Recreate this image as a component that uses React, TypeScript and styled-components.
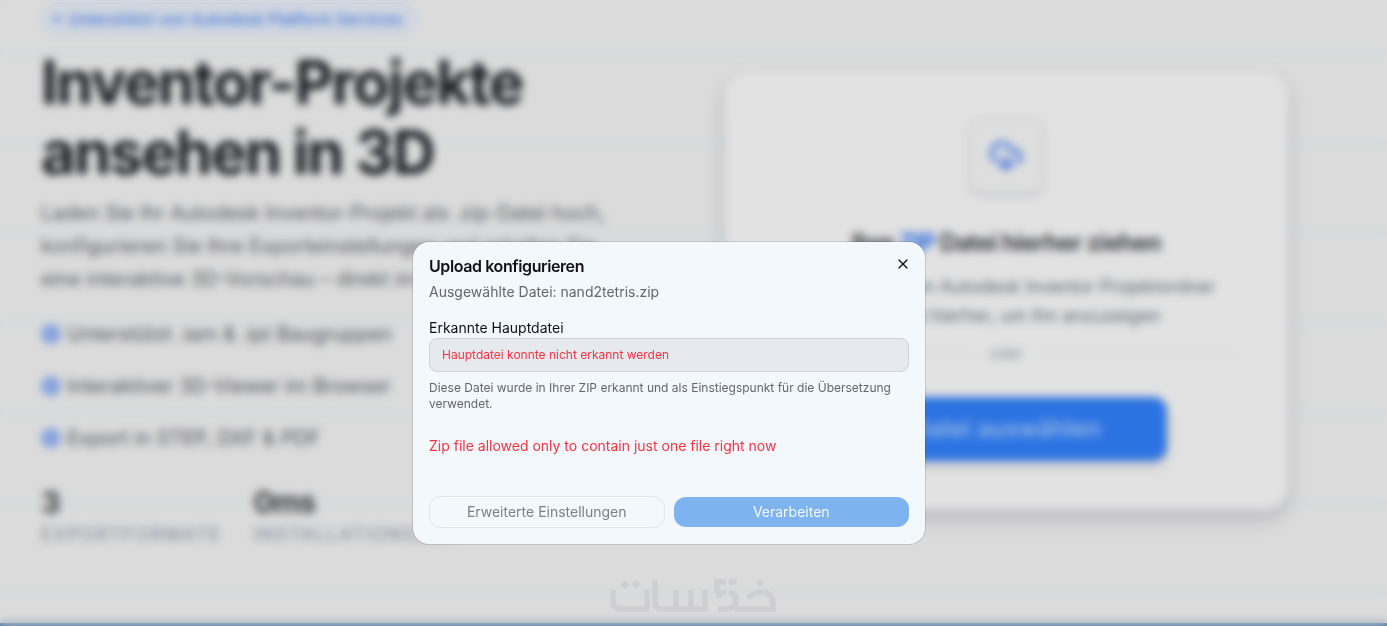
import React from "react";
import styled, { createGlobalStyle } from "styled-components";
import { CloudDownload, CircleCheck, X } from "lucide-react";

const GlobalStyle = createGlobalStyle`
  *, *::before, *::after { box-sizing: border-box; }
  body {
    margin: 0;
    overflow: hidden;
    background: #f4f4f4;
    color: #0f1115;
    font-family: Inter, "Liberation Sans", sans-serif;
    font-size: 14px;
    line-height: 20px;
  }
  h1, h2, p, ul, dl, dd { margin: 0; padding: 0; }
  button, input { font: inherit; }
`;

const Page = styled.div`
  display: flex;
  flex-direction: column;
  height: 100vh;
  overflow: hidden;
`;

const Hero = styled.main`
  flex: 1;
  min-height: 0;
  overflow: hidden;
  display: grid;
  grid-template-columns: minmax(0, 1fr) minmax(0, 1fr);
  gap: 120px;
  align-items: start;
  padding: 3px 99px 0 41px;
  background: repeating-linear-gradient(
    to bottom,
    transparent 0 52px,
    #e2f2f4 52px 54px,
    transparent 54px 90px
  );
`;

const NextSection = styled.footer`
  flex: none;
  height: 3px;
  background: #5f88b4;
`;

const Intro = styled.section`
  display: flex;
  flex-direction: column;
  align-items: flex-start;
`;

const Badge = styled.span`
  display: flex;
  align-items: center;
  gap: 8px;
  height: 32px;
  padding: 0 12px;
  border: 1px solid #c6d8fa;
  border-radius: 16px;
  background: #eaf0fb;
  color: #4a84f4;
  font-size: 16px;
  font-weight: 500;
  white-space: nowrap;
`;

const Dot = styled.i`
  width: 6px;
  height: 6px;
  border-radius: 50%;
  background: currentColor;
`;

const Headline = styled.h1`
  margin-top: 12px;
  font-size: 60px;
  font-weight: 700;
  line-height: 70px;
  letter-spacing: -0.03em;
  color: #1c1e24;
`;

const Lead = styled.p`
  margin-top: 10px;
  font-size: 20px;
  line-height: 33px;
  white-space: nowrap;
  color: #60646e;
`;

const Features = styled.ul`
  display: grid;
  gap: 24px;
  margin-top: 24px;
  list-style: none;
`;

const Feature = styled.li`
  display: flex;
  align-items: center;
  gap: 6px;
  font-size: 20px;
  line-height: 28px;
  color: #5a5e68;
  svg { color: #6f9df8; fill: #a9c5fa; }
`;

const Stats = styled.dl`
  display: flex;
  gap: 32px;
  margin-top: 32px;
`;

const Stat = styled.div`
  display: flex;
  flex-direction: column-reverse;
`;

const StatLabel = styled.dt`
  font-size: 18px;
  line-height: 30px;
  letter-spacing: 0.1em;
  text-transform: uppercase;
  color: #8c99ae;
`;

const StatValue = styled.dd`
  font-size: 30px;
  font-weight: 700;
  line-height: 36px;
  letter-spacing: -0.03em;
  color: #44464e;
`;

const DropCard = styled.section`
  display: flex;
  flex-direction: column;
  align-items: center;
  margin-top: 69px;
  padding: 46px 48px 49px;
  border-radius: 24px;
  background: #fcfcfc;
  box-shadow: 0 8px 18px rgba(40, 40, 70, 0.2);
  text-align: center;
`;

const IconTile = styled.div`
  display: grid;
  place-items: center;
  width: 76px;
  height: 76px;
  border: 1px solid #cfd3d8;
  border-radius: 14px;
  background: #f8f8f8;
  box-shadow: 0 2px 4px rgba(40, 40, 70, 0.16);
  color: #5a8ff7;
`;

const CardTitle = styled.h2`
  margin-top: 33px;
  font-size: 24px;
  font-weight: 700;
  line-height: 32px;
  letter-spacing: -0.03em;
  color: #4a4c54;
  span { color: #2f74f5; }
`;

const CardText = styled.p`
  margin-top: 13px;
  font-size: 18px;
  line-height: 29px;
  color: #6a7282;
`;

const Divider = styled.div`
  align-self: stretch;
  display: flex;
  align-items: center;
  gap: 12px;
  margin-top: 13px;
  font-size: 16px;
  line-height: 20px;
  color: #9aa2b0;
  &::before, &::after {
    content: "";
    flex: 1;
    height: 1px;
    background: #e3e6ec;
  }
`;

const PickButton = styled.button`
  width: 322px;
  height: 64px;
  margin-top: 34px;
  border: 0;
  border-radius: 14px;
  background: #3281fc;
  color: #b4d2ff;
  font-size: 24px;
  font-weight: 500;
  box-shadow: 0 6px 12px rgba(60, 60, 90, 0.16);
`;

const Overlay = styled.div`
  position: fixed;
  inset: 0;
  display: flex;
  justify-content: center;
  align-items: flex-start;
  padding: 242px 49px 0 0;
  background: rgba(0, 0, 0, 0.1);
  backdrop-filter: blur(4px);
`;

const Dialog = styled.div`
  position: relative;
  width: 100%;
  max-width: 512px;
  padding: 16px;
  border-radius: 16px;
  background: #f3f8fc;
  box-shadow: 0 0 0 1px rgba(0, 0, 0, 0.12);
`;

const DialogTitle = styled.h2`
  font-size: 16px;
  font-weight: 600;
  line-height: 16px;
  letter-spacing: -0.025em;
`;

const DialogText = styled.p`
  margin-top: 8px;
  color: #63676b;
`;

const CloseButton = styled.button`
  position: absolute;
  top: 8px;
  right: 8px;
  display: grid;
  place-items: center;
  width: 28px;
  height: 28px;
  padding: 0;
  border: 0;
  background: transparent;
  color: #0f1115;
`;

const Field = styled.div`
  display: flex;
  flex-direction: column;
  margin-top: 16px;
`;

const FileInput = styled.input`
  width: 100%;
  height: 34px;
  padding: 0 12px 2px;
  border: 1px solid #d0d3d7;
  border-radius: 8px;
  outline: 0;
  background: #e6e9ed;
  color: #fc333e;
  font-size: 12px;
`;

const Hint = styled.p`
  margin-top: 8px;
  font-size: 12px;
  line-height: 16px;
  color: #63676b;
`;

const ErrorText = styled.p`
  margin-top: 24px;
  color: #fc333e;
`;

const Actions = styled.div`
  display: grid;
  grid-template-columns: 1fr 1fr;
  align-items: center;
  gap: 9px;
  margin-top: 40px;
`;

const ActionButton = styled.button<{ $primary?: boolean }>`
  height: ${(p) => (p.$primary ? 30 : 32)}px;
  padding: 0;
  border: ${(p) => (p.$primary ? "0" : "1px solid #e3e6e9")};
  border-radius: 12px;
  background: ${(p) => (p.$primary ? "#7db3ee" : "transparent")};
  color: ${(p) => (p.$primary ? "#f3f8fc" : "#7d8185")};
`;

const Watermark = styled.svg`
  position: fixed;
  left: 50%;
  bottom: 12px;
  margin-left: -85px;
  color: #cfcfd2;
  pointer-events: none;
`;

const features = [
  "Unterstützt .iam & .ipt Baugruppen",
  "Interaktiver 3D-Viewer im Browser",
  "Export in STEP, DXF & PDF",
];

const stats = [
  { value: "3", label: "Exportformate" },
  { value: "0ms", label: "Installationszeit" },
];

function KhamsatLogo() {
  return (
    <Watermark width="168" height="35" viewBox="0 0 168 35" role="img" aria-label="خمسات">
      <g fill="none" stroke="currentColor" strokeWidth="5.5">
        <path d="M4 11V21Q4 30 13 30H38V11" />
        <path d="M46 1V22Q46 30 54 30H96V11M67 30V11M82 30V11" />
        <path d="M108 15V3H117M120 3H128" />
        <path d="M109 19Q111 13 117 13M120 13Q127 15 127 21Q127 30 117 30H109" />
        <path d="M126 30H164V25Q164 13 152 13Q144 13 139 19" />
      </g>
      <g fill="currentColor">
        <path d="M16 1L21 6L16 10L11 6ZM27 1L32 5L27 9L22 5Z" />
        <path d="M151 0L156 4L151 8L146 4Z" />
      </g>
    </Watermark>
  );
}

export default function App() {
  return (
    <>
      <GlobalStyle />
      <Page>
        <Hero>
          <Intro>
            <Badge>
              <Dot />
              Unterstützt von Autodesk Platform Services
            </Badge>
            <Headline>
              Inventor-Projekte
              <br />
              ansehen in 3D
            </Headline>
            <Lead>
              Laden Sie Ihr Autodesk Inventor-Projekt als .zip-Datei hoch,
              <br />
              konfigurieren Sie Ihre Exporteinstellungen und erhalten Sie
              <br />
              eine interaktive 3D-Vorschau – direkt im Browser.
            </Lead>
            <Features>
              {features.map((text) => (
                <Feature key={text}>
                  <CircleCheck size={20} strokeWidth={3} />
                  {text}
                </Feature>
              ))}
            </Features>
            <Stats>
              {stats.map((s) => (
                <Stat key={s.label}>
                  <StatLabel>{s.label}</StatLabel>
                  <StatValue>{s.value}</StatValue>
                </Stat>
              ))}
            </Stats>
          </Intro>
          <DropCard>
            <IconTile>
              <CloudDownload size={34} strokeWidth={3} />
            </IconTile>
            <CardTitle>
              Ihre <span>ZIP</span> Datei hierher ziehen
            </CardTitle>
            <CardText>
              Ziehen Sie Ihren Autodesk Inventor Projektordner
              <br />
              komplett hierher, um ihn anzuzeigen
            </CardText>
            <Divider>oder</Divider>
            <PickButton type="button">Datei auswählen</PickButton>
          </DropCard>
        </Hero>
        <NextSection />
      </Page>

      <Overlay>
        <Dialog role="dialog" aria-modal="true" aria-labelledby="dialog-title">
          <DialogTitle id="dialog-title">Upload konfigurieren</DialogTitle>
          <DialogText>Ausgewählte Datei: nand2tetris.zip</DialogText>
          <CloseButton type="button" aria-label="Schließen">
            <X size={16} />
          </CloseButton>
          <Field>
            <label htmlFor="main-file">Erkannte Hauptdatei</label>
            <FileInput id="main-file" readOnly value="Hauptdatei konnte nicht erkannt werden" />
            <Hint>
              Diese Datei wurde in Ihrer ZIP erkannt und als Einstiegspunkt für die Übersetzung
              verwendet.
            </Hint>
          </Field>
          <ErrorText role="alert">Zip file allowed only to contain just one file right now</ErrorText>
          <Actions>
            <ActionButton type="button">Erweiterte Einstellungen</ActionButton>
            <ActionButton type="button" $primary>
              Verarbeiten
            </ActionButton>
          </Actions>
        </Dialog>
      </Overlay>
      <KhamsatLogo />
    </>
  );
}
